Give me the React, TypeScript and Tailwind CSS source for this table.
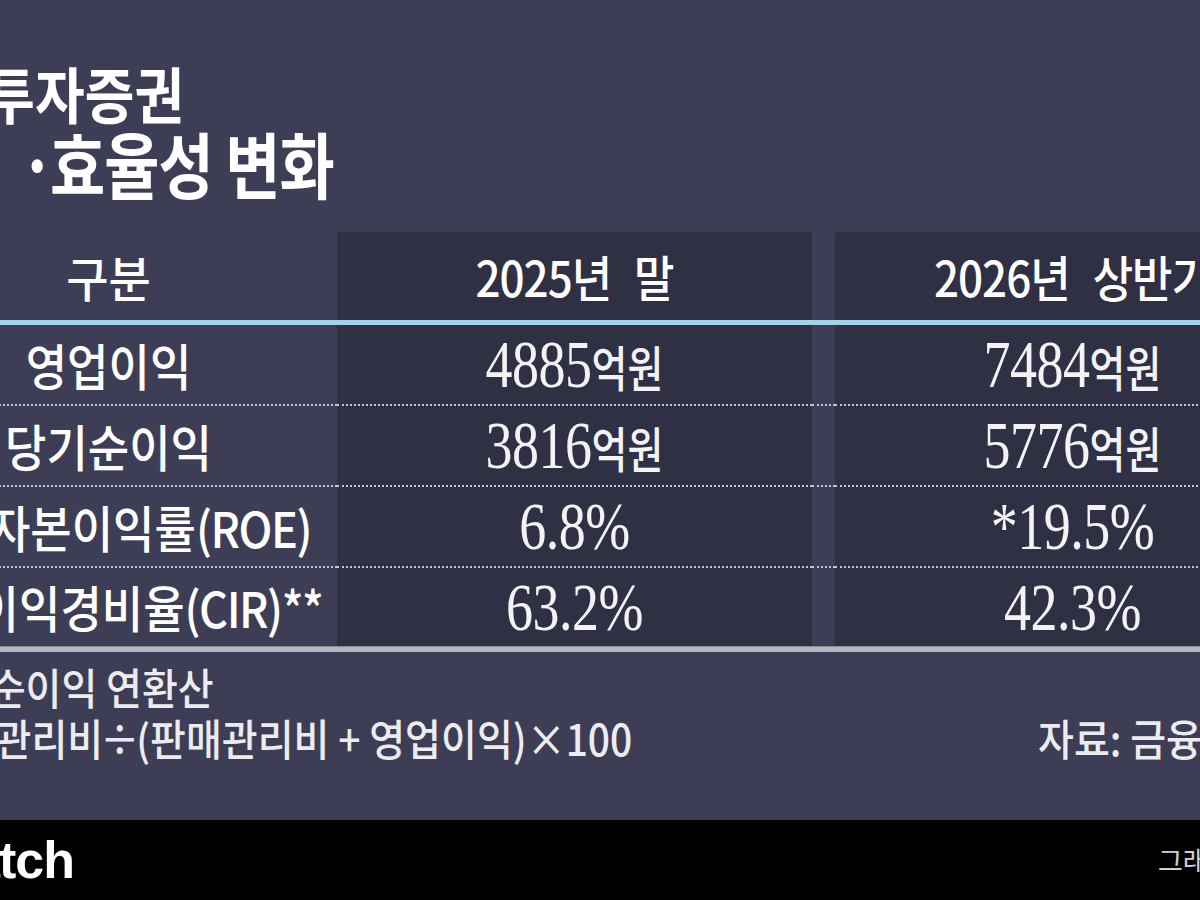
import React from "react";

const KR = "font-['Noto_Sans_CJK_KR',sans-serif]";
const SERIF = "font-['Liberation_Serif','Noto_Sans_CJK_KR',serif]";

function Num({ v, unit }: { v: string; unit?: string }) {
  return (
    <span className="inline-block scale-y-[1.26] whitespace-nowrap text-[#f3f3f5]">
      <span className={`${SERIF} text-[54px] tracking-[-0.5px]`}>{v}</span>
      {unit && <span className={`${KR} text-[39px] font-medium`}>{unit}</span>}
    </span>
  );
}

function Label({ children }: { children: React.ReactNode }) {
  return (
    <span className={`${KR} inline-block scale-y-[1.1] whitespace-nowrap text-[45px] font-medium text-white`}>
      {children}
    </span>
  );
}

const rows: { label: React.ReactNode; a: [string, string?]; b: [string, string?] }[] = [
  { label: "영업이익", a: ["4885", "억원"], b: ["7484", "억원"] },
  { label: "당기순이익", a: ["3816", "억원"], b: ["5776", "억원"] },
  {
    label: (
      <>
        자기자본이익률<span className="tracking-[-1.5px]">(ROE)</span>
      </>
    ),
    a: ["6.8%"],
    b: ["*19.5%"],
  },
  {
    label: (
      <>
        영업이익경비율<span className="tracking-[-1.5px]">(CIR)**</span>
      </>
    ),
    a: ["63.2%"],
    b: ["42.3%"],
  },
];

export default function App() {
  return (
    <div className={`${KR} w-[1200px] h-[900px] overflow-hidden bg-[#3d3e56] flex flex-col`}>
      <div className="h-[820px] flex flex-col pt-[62px]">
        {/* Title */}
        <div className="h-[60px] flex items-center">
          <span className="inline-block ml-[-114px] scale-y-[1.13] whitespace-nowrap text-[54px] font-bold text-white">
            한국투자증권
          </span>
        </div>
        <div className="h-[68px] mt-[6px] flex items-center whitespace-nowrap text-[60px] font-bold text-white tracking-[-1px]">
          <span className="inline-block ml-[-160px] w-[156px] scale-y-[1.19]">수익성</span>
          <span className="inline-block w-[54px] text-right tracking-[-5px] scale-y-[1.19]">·</span>
          <span className="inline-block scale-y-[1.19]">효율성 변화</span>
        </div>

        {/* Table */}
        <div className="mt-[36px] ml-[-120px] w-[1430px] flex flex-col">
          {/* Header */}
          <div className="flex h-[93px]">
            <div className="w-[457px] flex items-center justify-center border-b-[5px] border-[#a2d3ec]">
              <span className="inline-block scale-y-[1.05] text-[46px] font-medium text-white">구분</span>
            </div>
            <div className="w-[475px] bg-[#2f3044] rounded-t-[3px] flex items-center justify-center border-b-[5px] border-[#a2d3ec]">
              <span className="inline-block scale-y-[1.1] whitespace-nowrap text-[44px] font-medium text-white tracking-[-1px]">
                2025년 <span className="ml-[14px]">말</span>
              </span>
            </div>
            <div className="w-[23px] border-b-[5px] border-[#a2d3ec]" />
            <div className="w-[475px] bg-[#2f3044] rounded-t-[3px] flex items-center justify-center border-b-[5px] border-[#a2d3ec]">
              <span className="inline-block scale-y-[1.1] whitespace-nowrap text-[44px] font-medium text-white tracking-[-1px]">
                2026년 <span className="ml-[14px]">상반기</span>
              </span>
            </div>
          </div>

          {/* Rows */}
          {rows.map((r, i) => {
            const last = i === rows.length - 1;
            const bd = last ? "" : "border-b-2 border-dotted border-[#c3c4cf]";
            return (
              <div key={i} className={`flex ${last ? "h-[78px]" : "h-[81px]"}`}>
                <div className={`w-[457px] flex items-center justify-center ${bd}`}>
                  <Label>{r.label}</Label>
                </div>
                <div className={`w-[475px] bg-[#2f3044] flex items-center justify-center ${bd}`}>
                  <Num v={r.a[0]} unit={r.a[1]} />
                </div>
                <div className={`w-[23px] ${bd}`} />
                <div className={`w-[475px] bg-[#2f3044] flex items-center justify-center ${bd}`}>
                  <Num v={r.b[0]} unit={r.b[1]} />
                </div>
              </div>
            );
          })}
          <div className="h-[6px] bg-[#b6b7c3] border-t border-[#8b8c9a]" />
        </div>

        {/* Footnotes */}
        <div className="mt-[12px] h-[44px] flex items-center whitespace-nowrap text-[39px] font-medium text-[#ececf0]">
          <span className="inline-block ml-[-101px] scale-y-[1.1]">*당기순이익 연환산</span>
        </div>
        <div className="mt-[7px] h-[44px] flex items-center whitespace-nowrap text-[39px] font-medium text-[#ececf0]">
          <div className="w-[1038px] shrink-0">
            <span className="inline-block ml-[-114px] scale-y-[1.1]">
              **판매관리비<span className="-mx-[3px]">÷</span>(판매관리비 + 영업이익)×100
            </span>
          </div>
          <span className="inline-block scale-y-[1.1]">자료: 금융감독원</span>
        </div>
      </div>

      {/* Footer */}
      <div className="h-[80px] bg-black flex items-center justify-between">
        <div className="w-[74px] shrink-0 flex justify-end">
          <span className="shrink-0 whitespace-nowrap font-['Liberation_Sans',sans-serif] text-[52px] font-bold text-white tracking-[-1px]">
            bizwatch
          </span>
        </div>
        <div className="w-[42px] shrink-0 overflow-visible whitespace-nowrap">
          <span className="inline-block text-[27px] text-[#cfcfd3]">그래픽</span>
        </div>
      </div>
    </div>
  );
}
